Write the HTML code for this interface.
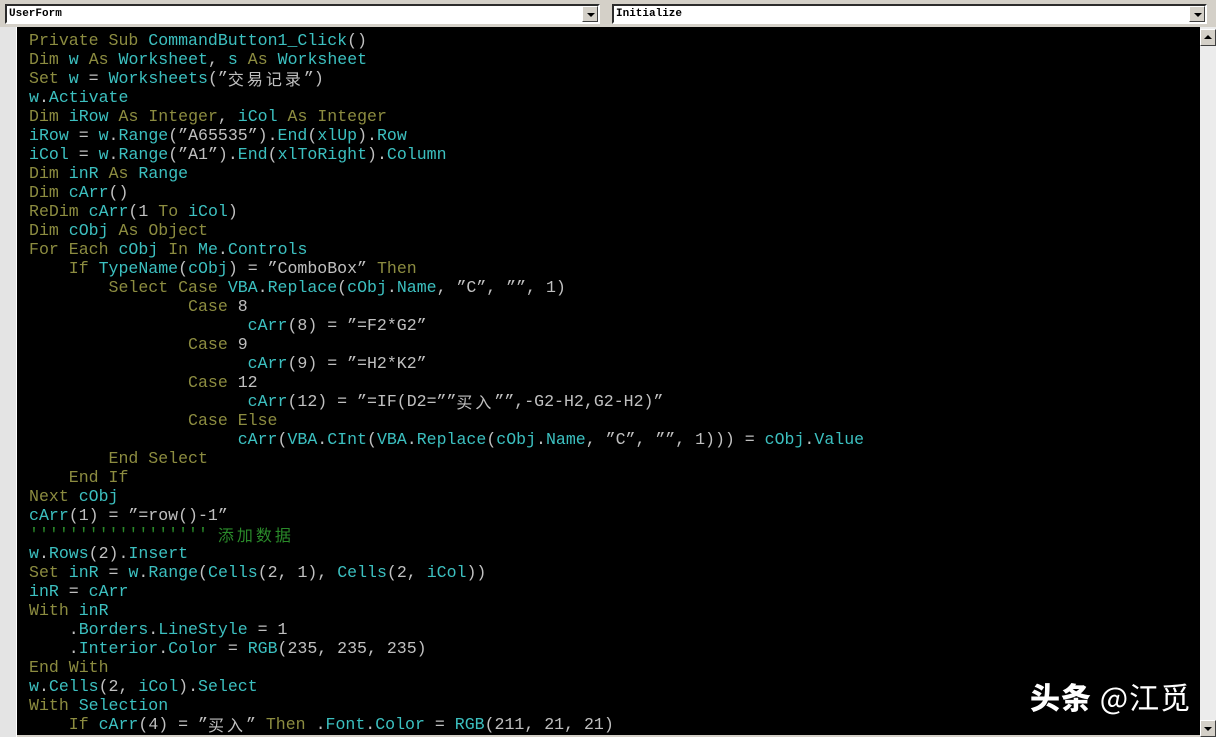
<!DOCTYPE html>
<html><head><meta charset="utf-8"><style>
*{margin:0;padding:0;box-sizing:border-box}
body{width:1216px;height:737px;overflow:hidden;background:#d4d0c8;position:relative;font-family:"Liberation Mono",monospace}
.combo{position:absolute;top:4px;height:20px;background:#fff;border:2px inset #999;border-color:#808080 #fff #fff #808080}
.combo span.t{position:absolute;left:2px;top:2px;font:bold 11px "Liberation Mono",monospace;color:#000}
.btn{position:absolute;right:0;top:0;width:16px;height:16px;background:#d4d0c8;border:1px solid;border-color:#fff #404040 #404040 #fff}
.btn:after{content:"";position:absolute;left:4px;top:6px;border-left:4px solid transparent;border-right:4px solid transparent;border-top:4px solid #000}
#left{position:absolute;left:0;top:27px;width:17px;height:710px;background:#e4e4e4;border-right:1px solid #fff}
#code{position:absolute;left:17px;top:27px;width:1183px;height:708px;background:#000;overflow:hidden}
pre{position:absolute;left:12px;top:4px;font-family:"Liberation Mono",monospace;font-size:16.57px;line-height:19px;color:#c0c0c0;white-space:pre}
.k{color:#8c8c40}.i{color:#3cc0c0}.c{color:#2a8a2a}
.z{letter-spacing:3px;font-family:"Noto Sans CJK SC",sans-serif;display:inline-block;height:19px;line-height:19px;vertical-align:top;font-size:16px}
#sb{position:absolute;left:1200px;top:27px;width:16px;height:710px;background:#ececec}
.sbb{position:absolute;left:0;width:16px;height:17px;background:#d4d0c8;border:1px solid;border-color:#fff #404040 #404040 #fff}
.up:after{content:"";position:absolute;left:3px;top:5px;border-left:4px solid transparent;border-right:4px solid transparent;border-bottom:4px solid #000}
.dn:after{content:"";position:absolute;left:3px;top:6px;border-left:4px solid transparent;border-right:4px solid transparent;border-top:4px solid #000}
#wm{position:absolute;left:1030px;top:677px;color:#fff;font-family:"Noto Sans CJK SC",sans-serif;font-size:30px;line-height:38px;white-space:nowrap;letter-spacing:1px}
#wm b{font-weight:900}
</style></head><body>
<div class="combo" style="left:5px;width:595px"><span class="t">UserForm</span><div class="btn"></div></div>
<div class="combo" style="left:612px;width:595px"><span class="t">Initialize</span><div class="btn"></div></div>
<div id="left"></div>
<div id="code"><pre><span class="k">Private Sub</span> <span class="i">CommandButton1_Click</span>()
<span class="k">Dim</span> <span class="i">w</span> <span class="k">As</span> <span class="i">Worksheet</span>, <span class="i">s</span> <span class="k">As</span> <span class="i">Worksheet</span>
<span class="k">Set</span> <span class="i">w</span> = <span class="i">Worksheets</span>(”<span class="z">交易记录</span>”)
<span class="i">w</span>.<span class="i">Activate</span>
<span class="k">Dim</span> <span class="i">iRow</span> <span class="k">As Integer</span>, <span class="i">iCol</span> <span class="k">As Integer</span>
<span class="i">iRow</span> = <span class="i">w</span>.<span class="i">Range</span>(”A65535”).<span class="i">End</span>(<span class="i">xlUp</span>).<span class="i">Row</span>
<span class="i">iCol</span> = <span class="i">w</span>.<span class="i">Range</span>(”A1”).<span class="i">End</span>(<span class="i">xlToRight</span>).<span class="i">Column</span>
<span class="k">Dim</span> <span class="i">inR</span> <span class="k">As</span> <span class="i">Range</span>
<span class="k">Dim</span> <span class="i">cArr</span>()
<span class="k">ReDim</span> <span class="i">cArr</span>(1 <span class="k">To</span> <span class="i">iCol</span>)
<span class="k">Dim</span> <span class="i">cObj</span> <span class="k">As Object</span>
<span class="k">For Each</span> <span class="i">cObj</span> <span class="k">In</span> <span class="i">Me</span>.<span class="i">Controls</span>
    <span class="k">If</span> <span class="i">TypeName</span>(<span class="i">cObj</span>) = ”ComboBox” <span class="k">Then</span>
        <span class="k">Select Case</span> <span class="i">VBA</span>.<span class="i">Replace</span>(<span class="i">cObj</span>.<span class="i">Name</span>, ”C”, ””, 1)
                <span class="k">Case</span> 8
                      <span class="i">cArr</span>(8) = ”=F2*G2”
                <span class="k">Case</span> 9
                      <span class="i">cArr</span>(9) = ”=H2*K2”
                <span class="k">Case</span> 12
                      <span class="i">cArr</span>(12) = ”=IF(D2=””<span class="z">买入</span>””,-G2-H2,G2-H2)”
                <span class="k">Case Else</span>
                     <span class="i">cArr</span>(<span class="i">VBA</span>.<span class="i">CInt</span>(<span class="i">VBA</span>.<span class="i">Replace</span>(<span class="i">cObj</span>.<span class="i">Name</span>, ”C”, ””, 1))) = <span class="i">cObj</span>.<span class="i">Value</span>
        <span class="k">End Select</span>
    <span class="k">End If</span>
<span class="k">Next</span> <span class="i">cObj</span>
<span class="i">cArr</span>(1) = ”=row()-1”
<span class="c">'''''''''''''''''' <span class="z">添加数据</span></span>
<span class="i">w</span>.<span class="i">Rows</span>(2).<span class="i">Insert</span>
<span class="k">Set</span> <span class="i">inR</span> = <span class="i">w</span>.<span class="i">Range</span>(<span class="i">Cells</span>(2, 1), <span class="i">Cells</span>(2, <span class="i">iCol</span>))
<span class="i">inR</span> = <span class="i">cArr</span>
<span class="k">With</span> <span class="i">inR</span>
    .<span class="i">Borders</span>.<span class="i">LineStyle</span> = 1
    .<span class="i">Interior</span>.<span class="i">Color</span> = <span class="i">RGB</span>(235, 235, 235)
<span class="k">End With</span>
<span class="i">w</span>.<span class="i">Cells</span>(2, <span class="i">iCol</span>).<span class="i">Select</span>
<span class="k">With</span> <span class="i">Selection</span>
    <span class="k">If</span> <span class="i">cArr</span>(4) = ”<span class="z">买入</span>” <span class="k">Then</span> .<span class="i">Font</span>.<span class="i">Color</span> = <span class="i">RGB</span>(211, 21, 21)
</pre></div>
<div id="sb"><div class="sbb up" style="top:2px"></div><div class="sbb dn" style="top:693px"></div></div>
<div id="wm"><b>头条</b> @江觅</div>
</body></html>
